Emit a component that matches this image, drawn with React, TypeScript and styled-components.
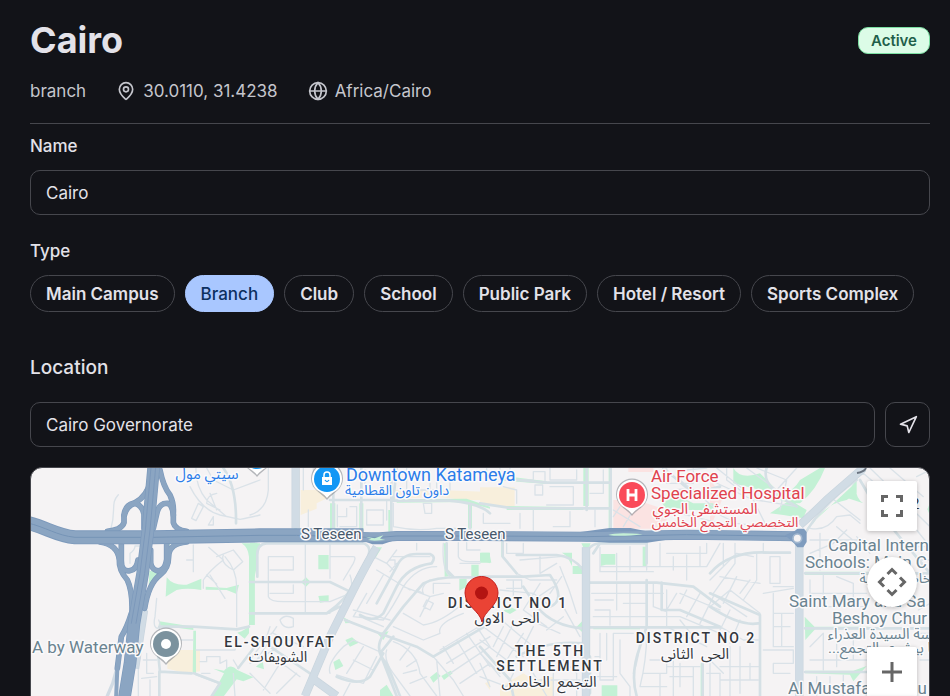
import React, { useState } from "react";
import styled, { createGlobalStyle, css } from "styled-components";
import { Globe, MapPin, Navigation } from "lucide-react";

const GlobalStyle = createGlobalStyle`
  *, *::before, *::after { box-sizing: border-box; }
  body {
    margin: 0;
    background: #121318;
    color: #e3e2e9;
    font-family: Inter, "Liberation Sans", sans-serif;
    font-size: 17px;
    line-height: 20px;
  }
`;

const line = "#46474d";

const Page = styled.main`
  height: 100vh;
  overflow: hidden;
  padding: 20px 20px 0 30px;
`;

const Header = styled.header`
  display: flex;
  flex-direction: column;
  gap: 19px;
  padding-bottom: 21px;
  border-bottom: 1px solid ${line};
`;

const TitleRow = styled.div`
  display: flex;
  align-items: center;
  justify-content: space-between;
`;

const Title = styled.h1`
  margin: 0;
  font-size: 36px;
  line-height: 41px;
  font-weight: 700;
`;

const Badge = styled.span`
  padding: 3px 12px;
  border: 1px solid #7bdfa2;
  border-radius: 10px;
  background: #dcfce7;
  color: #1f5f4a;
  font-size: 15px;
  line-height: 19px;
  font-weight: 600;
`;

const MetaRow = styled.div`
  display: flex;
  align-items: center;
  gap: 30px;
  color: #c5c6cd;
`;

const Meta = styled.span`
  display: flex;
  align-items: center;
  gap: 7px;
  line-height: 22px;
`;

const Field = styled.div`
  display: flex;
  flex-direction: column;
  gap: 14px;
  margin-top: 12px;
`;

const labelText = css`
  font-size: 17px;
  line-height: 20px;
  font-weight: 500;
`;

const Label = styled.label`
  ${labelText}
`;

const Group = styled.fieldset`
  margin: 26px 0 0;
  padding: 0;
  border: 0;
`;

const Legend = styled.legend`
  ${labelText}
  padding: 0;
  margin-bottom: 14px;
`;

const TextInput = styled.input`
  flex: 1 1 auto;
  min-width: 0;
  height: 45px;
  padding: 0 15px;
  border: 1px solid ${line};
  border-radius: 10px;
  background: transparent;
  color: inherit;
  font: inherit;
  outline: none;
`;

const NameInput = styled(TextInput)`
  flex: none;
`;

const Chips = styled.div`
  display: flex;
  flex-wrap: wrap;
  gap: 10px;
`;

const Chip = styled.button<{ $selected: boolean }>`
  height: 37px;
  padding: 0 15px;
  border: 1px solid ${(p) => (p.$selected ? "#a9c7ff" : line)};
  border-radius: 19px;
  background: ${(p) => (p.$selected ? "#a9c7ff" : "transparent")};
  color: ${(p) => (p.$selected ? "#0c305f" : "inherit")};
  font: inherit;
  font-weight: ${(p) => (p.$selected ? 500 : 600)};
  white-space: nowrap;
  cursor: pointer;
`;

const SectionTitle = styled.h2`
  margin: 42px 0 20px;
  font-size: 19px;
  line-height: 28px;
  font-weight: 500;
`;

const SearchRow = styled.div`
  display: flex;
  gap: 10px;
`;

const LocateButton = styled.button`
  display: grid;
  place-items: center;
  flex: none;
  width: 45px;
  height: 45px;
  padding: 0;
  border: 1px solid ${line};
  border-radius: 10px;
  background: transparent;
  color: inherit;
  cursor: pointer;
`;

const MapFrame = styled.section`
  position: relative;
  height: 402px;
  margin-top: 20px;
  overflow: hidden;
  border: 1px solid ${line};
  border-radius: 12px;
  background: #f5f3f4;
`;

const MapCanvas = styled.svg`
  display: block;
  width: 100%;
  height: 100%;
`;

const MapControls = styled.div`
  position: absolute;
  top: 13px;
  right: 12px;
  display: flex;
  flex-direction: column;
`;

const MapButton = styled.button<{ $round?: boolean; $gap?: number }>`
  display: grid;
  place-items: center;
  width: 50px;
  height: 50px;
  margin: ${(p) => p.$gap ?? 0}px 0 0;
  padding: 0;
  border: 0;
  border-radius: ${(p) => (p.$round ? "50%" : "2px")};
  background: #fff;
  color: #666;
  box-shadow: 0 1px 4px rgba(0, 0, 0, 0.25);
  cursor: pointer;
`;

const MapLabel = styled.text<{ $size: number; $color: string; $weight?: number; $tracked?: boolean }>`
  font-family: Roboto, "Noto Sans Arabic", "DejaVu Sans", sans-serif;
  font-size: ${(p) => p.$size}px;
  font-weight: ${(p) => p.$weight ?? 400};
  letter-spacing: ${(p) => (p.$tracked ? "2px" : "normal")};
  fill: ${(p) => p.$color};
  stroke: #fbfafb;
  stroke-width: 3px;
  stroke-linejoin: round;
  paint-order: stroke;
`;

const types = ["Main Campus", "Branch", "Club", "School", "Public Park", "Hotel / Resort", "Sports Complex"];

/* Geometry is drawn in thirds of a pixel, in four side-by-side sheets 690 units apart. */
type Sheet = {
  green: string[];
  sand?: string[];
  pink?: string[];
  minor: string[];
  mid: string[];
  main: string[];
};

const sheets: Sheet[] = [
  {
    green: [
      "M388 332L428 338L386 382Z", "M440 352Q460 378 500 374L544 356V390Q500 382 470 390L437 410Z",
      "M557 380L620 384L657 374L650 402L620 390L557 389Z", "M665 250H720V262Q704 270 704 290V495H687V290Q684 262 665 250Z",
      "M652 518Q680 510 687 494V520L674 536Z", "M575 708L612 640L580 626L612 632Q632 608 652 630L700 652L670 664L650 658L612 708Z",
      "M418 484L520 500V510L416 496Z", "M438 246H456L444 262Z", "M520 512H528V640H518Z",
    ],
    sand: ["M442 570H540V634L500 640L442 626Z"],
    minor: [
      "M295 104C270 130 290 150 272 210", "M330 310V280Q345 270 345 258H360",
      "M510 80Q545 150 600 165L660 178Q700 170 720 165", "M528 24Q526 80 560 120L620 170", "M560 24L580 60L640 90L720 60",
      "M515 175L535 130L550 140L528 182Z", "M565 195L580 170V195Z", "M570 100L590 150M590 100Q560 105 560 130L600 150",
      "M520 255V335M500 300H520", "M566 262L610 300Q570 330 550 360V385", "M590 290L640 270L668 305L640 330Q600 310 610 285",
      "M570 345L615 415M590 372L560 345", "M615 290Q650 330 650 380V500", "M410 415L405 470Q398 500 412 505Q425 500 416 480",
      "M355 625V708M370 600H410M380 580V640H400M365 655L410 650M390 660V708", "M418 505V540M440 540H520M528 570H645L655 535",
      "M540 605H560V590H600V610L620 600V625M545 640H570M640 600L655 625", "M528 645L600 672M640 640L645 708M690 600L720 560",
    ],
    mid: ["M418 500H520L650 508L687 500", "M412 560L420 635L515 640M418 635V708", "M610 24Q650 80 648 190", "M522 640L600 670L575 708", "M655 624L720 540"],
    main: ["M372 450L345 625"],
  },
  {
    green: [
      "M0 248H22Q28 300 14 350V495H0Z", "M205 285H236V328H205Z", "M205 408L236 406V424L210 428Z", "M153 366L168 352L182 366L168 380Z",
      "M240 130H256V210H240Z", "M328 130H340V215H328Z", "M415 150H425V215H415Z", "M128 215L137 198L146 215Z",
      "M368 262H396L374 298Z", "M286 540L306 532L326 548L300 560Z", "M250 606L268 596L280 618L256 630Z", "M390 690L410 674L430 708H390Z",
      "M540 652L560 636L572 648L550 668Z", "M574 648L602 632L608 640L582 660Z", "M582 250H592V330L606 348L584 350Z", "M664 314H686V350H664Z", "M694 278H720V310L694 300Z",
      "M654 130H666V205H654Z", "M440 118L650 116L720 140V146L650 126L440 128Z", "M628 356H650V380L628 392Z", "M18 620L38 602L42 628Z", "M382 520L416 514L400 540Z", "M280 472L312 488L286 490Z",
    ],
    sand: ["M152 90H200L240 102V110L200 130V146L152 165Z", "M430 90H570L720 96V120H640L560 110L430 118Z", "M705 670L720 662V690Z"],
    minor: [
      "M55 24V90Q50 150 0 165", "M160 90V24M175 150V200M190 24V80", "M262 135V200M262 170H290V145M300 140H320V200H270",
      "M345 30V90M350 150H400V195H350Z", "M360 120H410V180M430 130V200Q500 215 560 205L640 205M520 130H545V160H525Z", "M470 24V90H560V24",
      "M55 290H130V330H60M55 290V410Q60 425 100 425H240L300 400Q310 370 300 345M60 400H130V375", "M240 290H310Q320 290 310 310L280 360",
      "M166 248V460M240 250V355", "M22 460H240", "M90 480Q105 460 130 475V500Q100 510 90 480M70 520L160 560M60 500L40 560",
      "M370 290L410 310L440 270M410 310L430 330M420 300H435V320M380 330L480 390M400 345L350 430", "M430 290H540M330 470L400 500M310 450L420 480M440 310L420 335",
      "M350 400L310 470L400 480Q430 440 460 380Q500 320 560 320", "M460 380L540 410L580 400M540 410L510 470M550 400V370H600M500 390L520 400Q510 380 540 360",
      "M460 460L520 495Q570 490 640 430", "M430 500L520 540L570 520Q560 490 640 460", "M530 420L550 430L540 450L520 440Z",
      "M240 640Q230 610 280 560L310 540L400 580M260 645L340 670L380 590M310 600L370 630M340 560L290 640M300 670L280 708",
      "M410 570Q400 600 430 640L480 708M430 545Q500 570 510 640L560 708M450 600L480 560M470 620L500 600M460 640L500 630M480 670L530 650",
      "M550 590L610 660L640 708M570 570L720 480M590 610L720 530M600 640L720 560M630 670L720 610M580 560L610 610M620 540L680 640M650 520L720 620M680 500L720 560M560 600L570 708",
      "M0 640L60 700M0 610L90 560M40 690L90 610L110 620L150 650M60 540L20 600M80 700L140 640M0 550Q60 540 80 500",
      "M500 250V270M580 250Q575 330 600 350M625 248V290Q630 305 660 305H690M650 248V270H690M630 310H690M540 110V70M600 90V60",
    ],
    mid: [
      "M22 350V290Q20 252 50 250H340Q370 260 350 300L310 370Q290 420 230 460H0", "M0 366H240L300 395", "M250 24V210M334 24V210M424 60V215M240 120H430L440 24",
      "M430 122H600Q690 130 720 160M660 140V210", "M380 430L440 320Q455 282 500 282H540Q560 290 545 310Q470 320 440 380L400 460Q370 490 330 465",
      "M400 520L460 440L520 370Q560 350 640 352H720", "M285 480L400 524L500 560L550 590L720 490", "M400 524Q370 570 410 610L450 708",
      "M400 580L360 650Q330 680 260 650", "M440 708L390 580L430 530M180 640L120 600L60 560", "M590 250V330L610 350M230 460L270 440",
    ],
    main: ["M137 24V205", "M380 262Q350 310 300 410L240 530L165 708", "M180 650L260 708"],
  },
  {
    green: [
      "M0 278H28L34 308H0Z", "M278 318H308V342H278Z", "M246 278H276V318L262 290Z", "M304 250H332L320 282Z", "M310 24H326V138H310Z", "M386 24H396V205H386Z",
      "M290 500L310 480V520Z", "M362 282H406V314H378L362 318Z", "M365 676H412V708H365Z", "M340 500H480V508H340Z",
      "M70 48L200 64V72L70 62Z", "M80 138L310 142V150H80Z", "M64 245H72V290H64Z", "M488 260H500V318H488Z", "M70 452L90 440L110 450L90 462Z", "M662 610H670V708H662Z",
      "M540 120L600 110L640 130H700V150H560Z",
    ],
    sand: ["M0 82H104V140H60L0 126Z", "M60 680L130 640L160 660L220 650V708H60Z"],
    pink: ["M400 120H470L560 150V206H400Z", "M445 24H520V36H445Z"],
    minor: [
      "M20 24V50H60V24M90 24V60H160V35H195V70M70 80L110 90V130M165 75H188V105H165Z", "M210 24V60H290V30M210 80H280V135H200M120 160V205M160 150V210M270 155V200H220",
      "M10 160V190H90M330 100H370V30M345 150V200M400 150L480 200M420 140L400 170M460 150L430 200",
      "M80 250V280H130V250M180 290V340L230 310M120 300L240 290M240 320Q270 390 290 460M110 340L150 360H230M80 360H125V385H80M100 360V410",
      "M60 390L160 400L200 430M180 370L130 450L200 500M150 480L240 520M220 380L160 420M245 350L210 400",
      "M10 500L130 590M40 460L160 560M0 540L80 600M0 580L60 640M70 500L40 560M100 490L50 590M130 520L80 600M160 500L130 560",
      "M250 440L300 530M200 510L250 470M20 600L60 650M0 610L30 680M0 650L80 680L100 640M160 640L200 708M180 660H300M220 640V708M250 600L290 640V708",
      "M360 262V335H520M410 280V360M360 320H540V250M450 260V330M500 250V330M560 280H680V250M540 320H680L720 250M580 290V330M620 285V360M660 260V320",
      "M335 400H550M410 370V450M450 370V500M500 370V465M345 450H390V495M345 420H400M430 430H500V465M520 370V440L560 455",
      "M340 470H600L720 520M560 390V500M590 400L560 450M600 400L720 450M620 390L600 430M660 400L620 470M700 410L660 490M600 480L640 530",
      "M360 520V660H400V520H460M380 520V600M345 590H360M420 540V640L450 680V708M340 650H410M480 520Q480 590 460 640M500 520Q500 600 480 680H560M510 600H560V640H490M540 640V708M580 600V708",
      "M560 500L680 560M560 620H660M600 610V680M640 620V708M570 650H640M690 600V708M680 640H720M560 24V70H640V24M580 90Q640 80 720 110M560 150L720 190M600 60L700 140M620 30L680 24",
    ],
    mid: [
      "M60 55L200 68H390", "M0 130L100 145H390", "M68 245V290L110 340M0 350H130L210 345Q260 420 210 440", "M110 285H230Q280 290 310 330",
      "M320 24V150M392 24V205", "M130 380L170 440Q220 500 310 505", "M330 368H530L640 380L720 440M330 502H720", "M340 280L360 250H500V310M500 360V500L480 560Q450 640 470 708",
      "M330 590V700M330 262Q350 240 440 248M545 368V450H600L720 500", "M0 560L90 660L100 708M110 590Q200 540 310 550", "M668 610V708M550 24L640 100L720 80",
    ],
    main: ["M318 262V708"],
  },
  {
    green: [
      "M70 24Q90 60 150 40L200 90Q240 110 270 60L330 24H345Q320 90 270 130Q200 130 190 100L70 70Z", "M180 160L240 120L290 150L280 175L220 165Z",
      "M290 205L440 65V100L410 120Q350 130 310 190Z", "M440 60Q430 110 460 130L400 110Z", "M284 470L318 505L286 540Z", "M285 335H475V345H285Z", "M285 500H475V508H285Z",
      "M285 632H430L470 618L430 664L420 644L285 640Z", "M652 148L660 128V165Z",
    ],
    pink: ["M0 60L40 110L0 205Z"],
    minor: [
      "M0 60L130 120L170 200M20 24L140 120L260 140M50 24V60L90 90M110 24L200 90L260 24M140 24L230 60L210 150M0 150L80 190L200 205",
      "M0 360L80 280L130 290M40 250V320M75 250V310L10 400M140 280V360L100 420M180 290V370H210V290H180M160 250V280H240M190 380H250M160 400L250 385",
      "M30 350L150 370M80 350L40 430M120 360L90 400M0 440L60 390L150 460M20 410L110 470M60 450L30 510M90 480L60 550M150 460V708",
      "M190 400V560H250M215 460V560M190 460H250M190 500H240M160 570H250V610H190V640H240M30 500L100 540H145M30 620H150M60 560V708M90 560V700M30 660H145M120 610V660M0 600L40 640M30 708V640",
      "M340 130L460 40L530 100M360 110L450 180M300 205Q350 215 380 170L420 165L450 190M330 220V330M300 240H470M300 280L370 250L410 210M380 200L440 250",
      "M300 360V440H470M340 340V440M380 350L430 370V440M300 400H470M300 560L340 520V630M300 600H470M380 510V620M430 520V600M320 650V708M360 650V690H470M400 645V708",
      "M480 24L660 200M540 24L640 110M620 50L660 30M620 210L660 260M620 260H660V400M625 300H660M625 450L660 430M625 520H660M630 600H660M440 230L480 280",
    ],
    mid: ["M0 340Q60 270 180 278H240", "M0 400L150 465V708M0 440Q90 500 145 490", "M285 220Q340 130 440 60", "M285 340H660M285 505H660M285 636H470", "M450 60Q500 150 560 220L660 340", "M170 24Q150 80 260 140"],
    main: ["M268 240V708", "M270 195Q320 150 350 120L460 24"],
  },
];

const teseen = "M20 188C80 202 108 226 165 232H400L720 226H830L1050 232H1080L1130 228H1400L1700 230L2000 224L2330 229";
const teseenWest = "M20 188C80 202 108 226 165 232H400L720 226H1030";
const teseenBypass = "M1020 230L1060 245H1085L1130 230M1600 235L1770 212H1830L1900 226M1600 230L1770 240H1880L1950 230";
const ringRoad = "M403 0L384 210L368 340L342 490L330 610L312 720";

const ramps = [
  "M392 60Q382 110 342 130Q318 140 312 170V188Q305 210 262 214",
  "M372 205V162Q364 130 340 130Q316 135 312 165",
  "M420 30Q430 80 450 105Q462 130 460 160V188Q465 210 500 214",
  "M400 205L412 154Q420 128 444 130Q458 138 460 165",
  "M240 246Q294 254 298 300Q296 330 322 360Q336 390 336 440V470",
  "M304 246V302Q304 336 330 332Q350 330 354 300",
  "M500 246Q446 250 446 290Q446 325 420 345Q386 370 374 445",
  "M440 250V298Q434 336 410 332Q390 325 392 300V270",
  "M334 460Q322 500 304 530L292 625",
];

function Roads() {
  const layer = (pick: (s: Sheet) => string[] | undefined, key: string, paint: React.SVGProps<SVGGElement>) => (
    <g key={key} {...paint}>
      {sheets.map((s, i) => (
        <path key={i} transform={`translate(${i * 690} 0)`} d={(pick(s) ?? []).join("")} />
      ))}
    </g>
  );
  return (
    <g transform="translate(20 460) scale(0.33333)" fill="none" strokeLinejoin="round" strokeLinecap="round">
      {layer((s) => s.sand, "sand", { fill: "#f8efdc" })}
      {layer((s) => s.pink, "pink", { fill: "#fbe3e2" })}
      {layer((s) => s.green, "green", { fill: "#c3f1d5" })}
      {layer((s) => s.minor, "minor", { stroke: "#dae2e8", strokeWidth: 4 })}
      {layer((s) => s.mid, "mid", { stroke: "#d5e0e5", strokeWidth: 8 })}
      {layer((s) => s.main, "mainEdge", { stroke: "#c9d5de", strokeWidth: 25, strokeLinecap: "butt" })}
      {layer((s) => s.main, "main", { stroke: "#d1dce5", strokeWidth: 21, strokeLinecap: "butt" })}
      <path d="M292 620L278 670L262 708" stroke="#d1dbe4" strokeWidth="10" />
      <g stroke="#7c99bb" strokeWidth="17">
        {ramps.map((d) => <path key={d} d={d} />)}
      </g>
      <g stroke="#8ba5c2" strokeWidth="13">
        {ramps.map((d) => <path key={d} d={d} />)}
      </g>
      <g strokeLinecap="butt">
        <path d={teseenBypass} stroke="#7c99bb" strokeWidth="16" />
        <path d={teseen} stroke="#7c99bb" strokeWidth="30" />
        <path d={teseenWest} stroke="#7c99bb" strokeWidth="42" />
        <path d={teseen} stroke="#8ba5c2" strokeWidth="26" />
        <path d={teseenWest} stroke="#8ba5c2" strokeWidth="37" />
        <path d={teseen} stroke="#7594b6" strokeWidth="3" />
      </g>
      <path d={ringRoad} stroke="#7c99bb" strokeWidth="38" />
      <path d={ringRoad} stroke="#8ba5c2" strokeWidth="34" />
      <path d="M409 0L390 210L374 340L348 490M395 0L376 210L360 340L334 490" stroke="#7c99bb" strokeWidth="3" />
      <path d="M292 625L288 720" stroke="#8ba5c2" strokeWidth="12" />
      <path d="M1036 230L1064 235L1090 226L1080 236L1096 240L1064 242L1044 240L1054 236Z" fill="#c5f0d6" />
      <path d="M1765 225Q1790 216 1868 223Q1800 231 1765 225Z" fill="#c5f0d6" />
      <path d="M2295 226L2325 212L2332 206H2352L2360 216V246L2350 262H2332L2322 250Z" fill="#7f9cbe" />
      <circle cx="2332" cy="235" r="13" fill="#f5f3f4" stroke="#a3b8d0" strokeWidth="5" />
    </g>
  );
}

type LabelSpec = [text: string, x: number, y: number, size: number, color: string, weight?: number, anchor?: "start" | "middle", tracked?: boolean];

const blue = "#2b7de9";
const red = "#e0424e";
const slate = "#6a8390";
const ink = "#33373d";

const latin: LabelSpec[] = [
  ["Downtown Katameya", 346, 481, 18, blue],
  ["S Teseen", 301, 539, 15, "#46586c"],
  ["S Teseen", 445, 539, 15, "#46586c"],
  ["A by Waterway", 32, 653, 17, slate],
  ["EL-SHOUYFAT", 280, 647, 14, ink, 500, "middle", true],
  ["DISTRICT NO 1", 508, 608, 14, ink, 500, "middle", true],
  ["THE 5TH", 550, 656, 14, ink, 500, "middle", true],
  ["SETTLEMENT", 550, 671, 14, ink, 500, "middle", true],
  ["DISTRICT NO 2", 696, 643, 14, ink, 500, "middle", true],
  ["Air Force", 651, 482, 17, red],
  ["Specialized Hospital", 651, 499, 17, red],
  ["Capital Intern", 828, 551, 17, slate],
  ["Schools: Main C", 805, 568, 17, slate],
  ["Saint Mary and Sa", 789, 607, 17, slate],
  ["Beshoy Chur", 832, 624, 17, slate],
  ["Al Mustafa Mosqu", 788, 694, 17, slate],
  ["2", 911, 509, 15, ink],
];

const arabic: LabelSpec[] = [
  ["سيتي مول", 207, 479, 15, blue],
  ["داون تاون القطامية", 397, 495, 14, blue],
  ["الشويفات", 278, 662, 15, ink],
  ["الحى\u00a0 الاول", 507, 623, 15, ink],
  ["التجمع\u00a0 الخامس", 549, 687, 15, ink],
  ["الحى\u00a0 الثانى", 695, 659, 15, ink],
  ["المستشفى الجوي", 705, 514, 15, red],
  ["التخصصي التجمع الخامس", 725, 527, 14, red],
  ["الخاصة الدولية", 899, 583, 14, slate],
  ["كنيسة السيدة العذراء", 889, 639, 15, slate],
  ["والأنبا بيشوي التجمع...", 894, 653, 15, slate],
];

function Labels() {
  return (
    <>
      {latin.map(([text, x, y, size, color, weight, anchor, tracked]) => (
        <MapLabel key={`${text}${x}`} x={x} y={y} textAnchor={anchor} $size={size} $color={color} $weight={weight} $tracked={tracked}>
          {text}
        </MapLabel>
      ))}
      {arabic.map(([text, x, y, size, color]) => (
        <MapLabel key={text} x={x} y={y} direction="rtl" textAnchor="middle" $size={size} $color={color}>
          {text}
        </MapLabel>
      ))}
    </>
  );
}

function Poi({ x, y, color, children }: { x: number; y: number; color: string; children?: React.ReactNode }) {
  return (
    <g transform={`translate(${x} ${y})`}>
      <path d="M0 21C-3 17-8 14-11 11A16 16 0 1 1 11 11C8 14 3 17 0 21Z" fill="#7d848b" opacity="0.55" />
      <path d="M0 19C-3 15-7 13-10 11A15 15 0 1 1 10 11C7 13 3 15 0 19Z" fill="#fff" />
      <circle r="13" fill={color} />
      {children}
    </g>
  );
}

function CampusMap() {
  return (
    <MapCanvas viewBox="31 468 898 400" preserveAspectRatio="xMidYMin slice" role="img" aria-label="Map of Cairo">
      <Roads />
      <Labels />
      <Poi x={257} y={456} color="#1297f5" />
      <Poi x={327} y={479} color="#1297f5">
        <path d="M-5-2H5V6H-5Z" fill="#fff" />
        <path d="M-3-2V-4A3 3 0 0 1 3-4V-2" fill="none" stroke="#fff" strokeWidth="1.500" />
        <path d="M-2 1Q0 4 2 1" fill="none" stroke="#1297f5" strokeWidth="1.300" />
      </Poi>
      <Poi x={632} y={495} color="#fa4b5a">
        <path d="M-4-6V6M4-6V6M-4 0H4" stroke="#fff" strokeWidth="2.800" />
      </Poi>
      <Poi x={166} y={644} color="#7b929e">
        <circle r="5" fill="#fff" />
      </Poi>
      <path d="M482 622C480 611 465 606 465 593A16.500 16.500 0 0 1 498 593C498 606 484 611 482 622Z" fill="#ea4335" stroke="#c5221f" strokeWidth="1" />
      <circle cx="481.500" cy="593" r="6.500" fill="#b31412" />
      <path d="M857 473Q864 472 866 468" stroke="#6a7480" strokeWidth="2" fill="none" />
    </MapCanvas>
  );
}

export default function App() {
  const [name, setName] = useState("Cairo");
  const [place, setPlace] = useState("Cairo Governorate");
  const [type, setType] = useState("Branch");

  return (
    <>
      <GlobalStyle />
      <Page>
        <Header>
          <TitleRow>
            <Title>Cairo</Title>
            <Badge>Active</Badge>
          </TitleRow>
          <MetaRow>
            <Meta>branch</Meta>
            <Meta><MapPin size={20} aria-hidden />30.0110, 31.4238</Meta>
            <Meta><Globe size={20} aria-hidden />Africa/Cairo</Meta>
          </MetaRow>
        </Header>

        <Field>
          <Label htmlFor="name">Name</Label>
          <NameInput id="name" value={name} onChange={(e) => setName(e.target.value)} />
        </Field>

        <Group>
          <Legend>Type</Legend>
          <Chips>
            {types.map((t) => (
              <Chip key={t} type="button" $selected={t === type} aria-pressed={t === type} onClick={() => setType(t)}>
                {t}
              </Chip>
            ))}
          </Chips>
        </Group>

        <SectionTitle id="location-title">Location</SectionTitle>
        <SearchRow>
          <TextInput aria-labelledby="location-title" value={place} onChange={(e) => setPlace(e.target.value)} />
          <LocateButton type="button" aria-label="Use current location">
            <Navigation size={20} />
          </LocateButton>
        </SearchRow>

        <MapFrame aria-label="Map">
          <CampusMap />
          <MapControls>
            <MapButton type="button" aria-label="Toggle fullscreen">
              <svg width="24" height="24" viewBox="0 0 24 24" fill="none" stroke="currentColor" strokeWidth="3">
                <path d="M2.500 8V2.500H8M16 2.500H21.500V8M21.500 16V21.500H16M8 21.500H2.500V16" />
              </svg>
            </MapButton>
            <MapButton type="button" aria-label="Map camera controls" $round $gap={26}>
              <svg width="30" height="30" viewBox="0 0 30 30" fill="none" stroke="currentColor" strokeWidth="3">
                <path d="M10.500 7L15 2.500L19.500 7M10.500 23L15 27.500L19.500 23M7 10.500L2.500 15L7 19.500M23 10.500L27.500 15L23 19.500" />
              </svg>
            </MapButton>
            <MapButton type="button" aria-label="Zoom in" $gap={40}>
              <svg width="22" height="22" viewBox="0 0 22 22" stroke="currentColor" strokeWidth="3">
                <path d="M11 1V21M1 11H21" />
              </svg>
            </MapButton>
            <MapButton type="button" aria-label="Zoom out">
              <svg width="22" height="22" viewBox="0 0 22 22" stroke="currentColor" strokeWidth="3">
                <path d="M1 11H21" />
              </svg>
            </MapButton>
          </MapControls>
        </MapFrame>
      </Page>
    </>
  );
}
